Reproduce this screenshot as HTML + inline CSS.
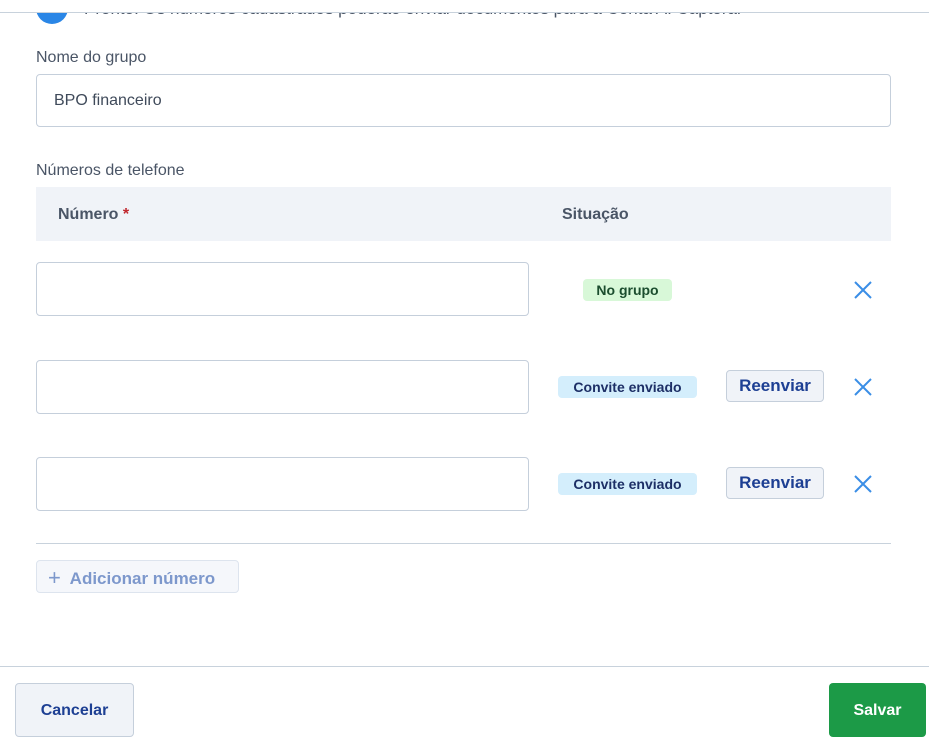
<!DOCTYPE html>
<html><head><meta charset="utf-8"><style>
*{box-sizing:border-box;margin:0;padding:0}
body{width:929px;height:738px;background:#fff;font-family:"Liberation Sans",sans-serif;position:relative;overflow:hidden;color:#3f4a5a}
.a{position:absolute}
.clip{position:absolute;left:0;top:13px;width:929px;height:20px;overflow:hidden}
.inp{position:absolute;border:1px solid #c5cfdb;border-radius:4px;background:#fff}
.x{position:absolute;width:22px;height:22px}
.badge{position:absolute;border-radius:4px;font-size:14px;font-weight:bold;text-align:center;line-height:22px}
.re{position:absolute;left:726px;width:98px;height:32px;border:1px solid #c5cfdb;border-radius:4px;background:#f0f3f8;color:#1d3f93;font-size:17px;text-align:center;line-height:30px;font-weight:bold}
</style></head><body>
<div class="a" style="left:0;top:12px;width:929px;height:1px;background:#c8d2dc"></div>
<div class="clip">
 <div class="a" style="left:36px;top:-21px;width:32px;height:32px;border-radius:50%;background:#2a86e6"></div>
 <div class="a" style="left:84px;top:-14px;font-size:17px;color:#4a5566;white-space:nowrap">Pronto! Os números cadastrados poderão enviar documentos para a Conta AI Captoral</div>
</div>
<div class="a" style="left:36px;top:49px;font-size:16px;color:#4a5566">Nome do grupo</div>
<div class="inp" style="left:36px;top:74px;width:855px;height:53px"></div>
<div class="a" style="left:54px;top:92px;font-size:16px;color:#3f4a5a">BPO financeiro</div>
<div class="a" style="left:36px;top:162px;font-size:16px;color:#4a5566">Números de telefone</div>
<div class="a" style="left:36px;top:187px;width:855px;height:54px;background:#f0f3f8"></div>
<div class="a" style="left:58px;top:206px;font-size:16px;font-weight:bold;color:#4a5566">Número <span style="color:#c0262d">*</span></div>
<div class="a" style="left:562px;top:206px;font-size:16px;font-weight:bold;color:#4a5566">Situação</div>

<div class="inp" style="left:36px;top:262px;width:493px;height:54px"></div>
<div class="badge" style="left:583px;top:279px;width:89px;background:#d8f8d8;color:#1b4d2e">No grupo</div>
<svg class="x" style="left:852px;top:279px" viewBox="0 0 22 22"><path d="M3 3L19 19M19 3L3 19" stroke="#3a8ee6" stroke-width="2" fill="none"/></svg>

<div class="inp" style="left:36px;top:360px;width:493px;height:54px"></div>
<div class="badge" style="left:558px;top:376px;width:139px;background:#d4eefc;color:#1d2f66">Convite enviado</div>
<div class="re" style="top:370px">Reenviar</div>
<svg class="x" style="left:852px;top:376px" viewBox="0 0 22 22"><path d="M3 3L19 19M19 3L3 19" stroke="#3a8ee6" stroke-width="2" fill="none"/></svg>

<div class="inp" style="left:36px;top:457px;width:493px;height:54px"></div>
<div class="badge" style="left:558px;top:473px;width:139px;background:#d4eefc;color:#1d2f66">Convite enviado</div>
<div class="re" style="top:467px">Reenviar</div>
<svg class="x" style="left:852px;top:473px" viewBox="0 0 22 22"><path d="M3 3L19 19M19 3L3 19" stroke="#3a8ee6" stroke-width="2" fill="none"/></svg>

<div class="a" style="left:36px;top:543px;width:855px;height:1px;background:#c8d2dc"></div>
<div class="a" style="left:36px;top:560px;width:203px;height:33px;border:1px solid #dde4ee;border-radius:4px;background:#f5f7fb;color:#7d98cc;font-size:17px;font-weight:bold;line-height:31px;padding-left:11px"><span style="font-weight:normal;font-size:22px;position:relative;top:1px">+</span>&nbsp; Adicionar número</div>

<div class="a" style="left:0;top:666px;width:929px;height:1px;background:#c8d2dc"></div>
<div class="a" style="left:15px;top:683px;width:119px;height:54px;border:1px solid #c5cfdb;border-radius:4px;background:#f0f3f8;color:#1d3f93;font-size:16px;font-weight:bold;text-align:center;line-height:54px">Cancelar</div>
<div class="a" style="left:829px;top:683px;width:97px;height:54px;border-radius:4px;background:#1c9a47;color:#fff;font-size:16px;font-weight:bold;text-align:center;line-height:56px">Salvar</div>
</body></html>
